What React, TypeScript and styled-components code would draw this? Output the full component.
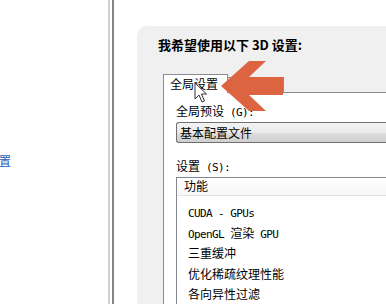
import React from 'react';
import styled, { createGlobalStyle } from 'styled-components';

const GlobalStyle = createGlobalStyle`
  html, body {
    margin: 0;
    padding: 0;
    background: #ffffff;
  }
  body {
    font-family: 'Noto Sans CJK SC', 'Liberation Sans', sans-serif;
    color: #000000;
  }
`;

const Page = styled.div`
  position: relative;
  display: flex;
  width: 386px;
  height: 304px;
  overflow: hidden;
  background: #ffffff;
`;

const LeftPane = styled.div`
  width: 108px;
  flex-shrink: 0;
  padding-top: 154px;
  box-sizing: border-box;
`;

const LinkText = styled.span`
  display: block;
  margin-left: -1px;
  font-size: 12px;
  line-height: 14px;
  color: #1c5cb8;
`;

const Divider = styled.div`
  width: 6px;
  flex-shrink: 0;
  box-sizing: border-box;
  border-left: 2px solid #d0d0d0;
  border-right: 2px solid #858585;
  background: #ffffff;
`;

const Main = styled.div`
  flex: 1;
  padding: 26px 0 0 23px;
  min-width: 0;
`;

const Panel = styled.div`
  position: relative;
  height: 100%;
  background: #f0f0f0;
  border-top-left-radius: 10px;
  padding: 12px 0 0 21px;
  box-sizing: border-box;
`;

const Title = styled.div`
  height: 14px;
  font-size: 13px;
  line-height: 14px;
  font-weight: 700;
  white-space: nowrap;
`;

const Tabs = styled.div`
  margin: 22px 0 0 5px;
`;

const TabRow = styled.div`
  display: flex;
  align-items: flex-end;
`;

const Tab = styled.div<{ $active?: boolean }>`
  position: relative;
  box-sizing: border-box;
  border: 1px solid #898c95;
  border-bottom: none;
  font-size: 12px;
  line-height: 16px;
  white-space: nowrap;
  ${(p) =>
    p.$active
      ? `
    z-index: 1;
    height: 19px;
    margin-bottom: -1px;
    padding: 1px 9px 0 6px;
    background: #ffffff;
  `
      : `
    height: 15px;
    width: 56px;
    border-left: none;
    background: linear-gradient(#f4f4f4, #e3e3e3);
  `}
`;

const TabBody = styled.div`
  border-top: 1px solid #898c95;
  border-left: 1px solid #898c95;
  background: #ffffff;
  padding: 11px 0 40px 12px;
`;

const FieldLabel = styled.div<{ $gap?: number }>`
  height: 14px;
  margin-top: ${(p) => p.$gap ?? 0}px;
  font-size: 12px;
  line-height: 14px;
  white-space: nowrap;
`;

const Mono = styled.span`
  font-family: 'DejaVu Sans Mono', 'Liberation Mono', monospace;
  font-size: 11px;
  letter-spacing: -0.6px;
  line-height: 1;
`;

const Select = styled.div`
  margin-top: 4px;
  height: 21px;
  box-sizing: border-box;
  border: 1px solid #707070;
  border-right: none;
  border-radius: 3px 0 0 3px;
  background: linear-gradient(#f3f3f3 0%, #ebebeb 50%, #dddddd 51%, #cfcfcf 100%);
  padding-left: 3px;
  font-size: 12px;
  line-height: 19px;
  white-space: nowrap;
`;

const ListBox = styled.div`
  margin-top: 4px;
  border-top: 1px solid #828790;
  border-left: 1px solid #828790;
  background: #ffffff;
`;

const ListHeader = styled.div`
  height: 18px;
  box-sizing: border-box;
  border-bottom: 1px solid #e3e3e3;
  background: linear-gradient(#ffffff, #f7f7f7);
  padding-left: 7px;
  font-size: 12px;
  line-height: 16px;
`;

const Rows = styled.div`
  padding-top: 6px;
`;

const Row = styled.div`
  height: 20.5px;
  padding-left: 11px;
  font-size: 12px;
  line-height: 20px;
  white-space: nowrap;
`;

const Overlay = styled.svg`
  position: absolute;
  pointer-events: none;
  z-index: 5;
`;

const rows: React.ReactNode[] = [
  <Mono key="a">CUDA - GPUs</Mono>,
  <React.Fragment key="b">
    <Mono>OpenGL </Mono>渲染<Mono> GPU</Mono>
  </React.Fragment>,
  '三重缓冲',
  '优化稀疏纹理性能',
  '各向异性过滤',
];

function App() {
  return (
    <Page>
      <GlobalStyle />
      <LeftPane>
        <LinkText>置</LinkText>
      </LeftPane>
      <Divider />
      <Main>
        <Panel>
          <Title>我希望使用以下 3D 设置:</Title>
          <Tabs>
            <TabRow>
              <Tab $active>全局设置</Tab>
              <Tab />
            </TabRow>
            <TabBody>
              <FieldLabel>
                全局预设<Mono> (G):</Mono>
              </FieldLabel>
              <Select>基本配置文件</Select>
              <FieldLabel $gap={16}>
                设置<Mono> (S):</Mono>
              </FieldLabel>
              <ListBox>
                <ListHeader>功能</ListHeader>
                <Rows>
                  {rows.map((r, i) => (
                    <Row key={i}>{r}</Row>
                  ))}
                </Rows>
              </ListBox>
            </TabBody>
          </Tabs>
        </Panel>
      </Main>

      {/* red arrow pointing at the tab */}
      <Overlay style={{ left: 218, top: 58 }} width="70" height="56" viewBox="0 0 70 56">
        <polygon
          points="3,28 31,3 48,3 31,19 65,19 65,37 31,37 48,53 31,53"
          fill="#dc6440"
        />
      </Overlay>

      {/* mouse pointer */}
      <Overlay style={{ left: 194, top: 82 }} width="14" height="22" viewBox="0 0 14 22">
        <path
          d="M1 1 L1 17 L5 13 L8 20 L10.5 19 L7.5 12 L12.5 12 Z"
          fill="#ffffff"
          stroke="#333333"
          strokeWidth="1"
          strokeLinejoin="round"
        />
      </Overlay>
    </Page>
  );
}

export default App;
